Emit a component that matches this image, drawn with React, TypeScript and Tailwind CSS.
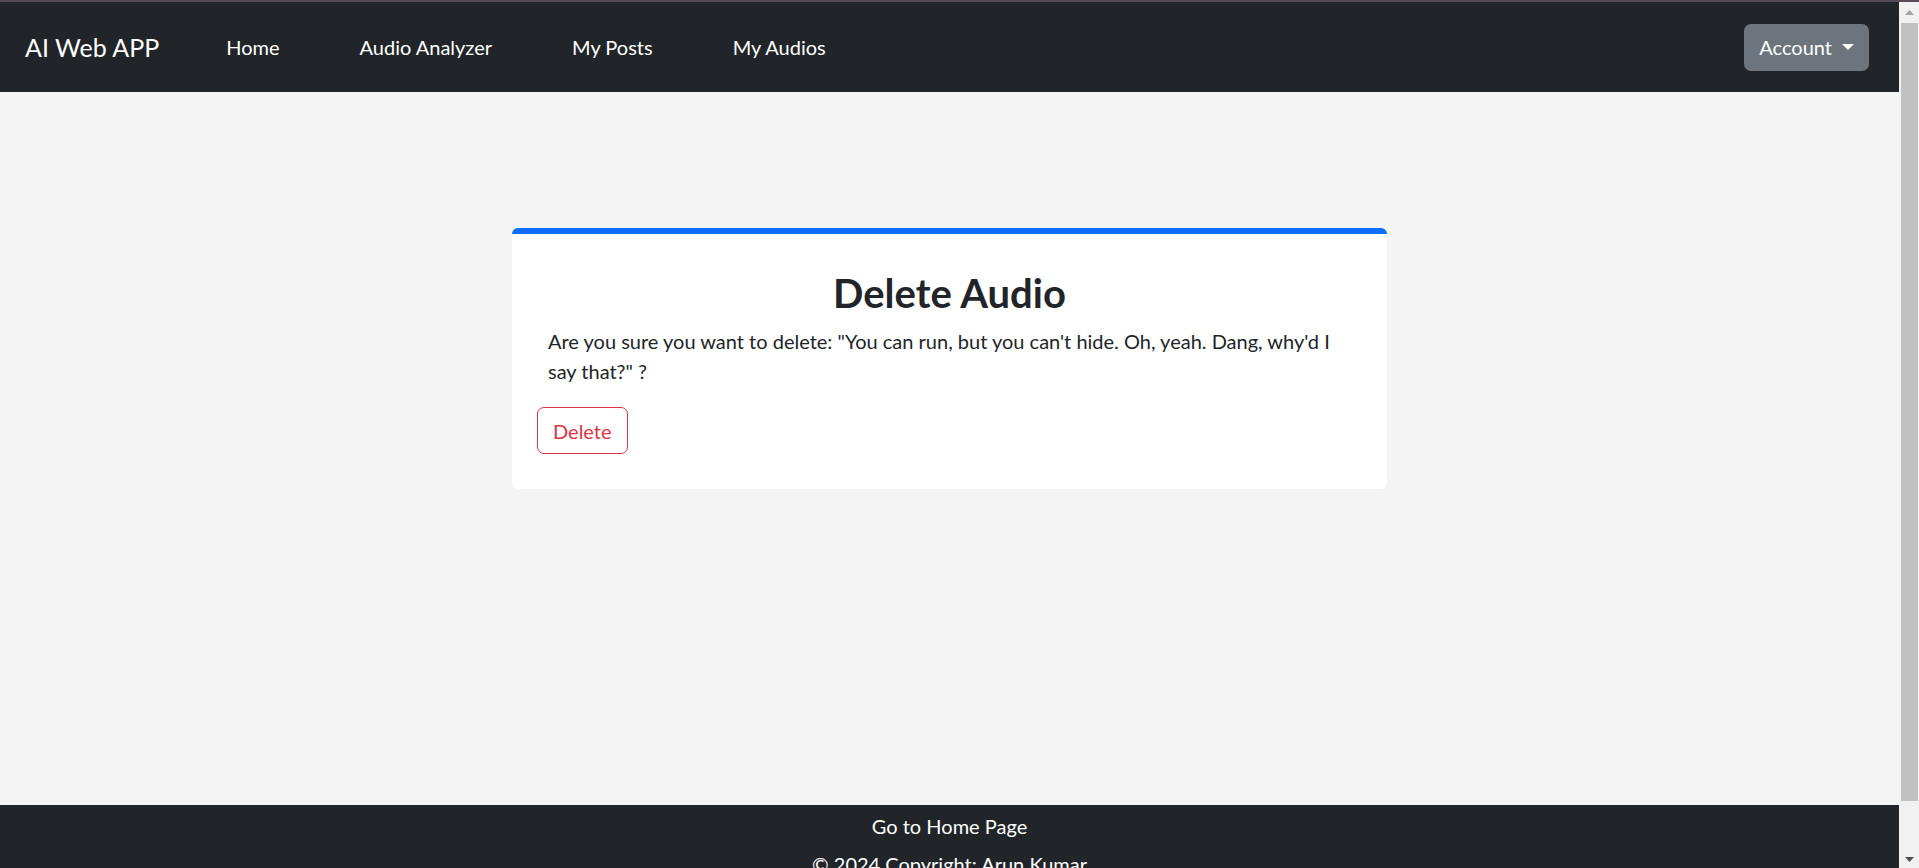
import { useState } from 'react';

const links = ['Home', 'Audio Analyzer', 'My Posts', 'My Audios'];

function Scrollbar() {
  return (
    <div className="w-[20px] shrink-0 bg-[#f1f1f1] flex flex-col">
      <div className="h-[21px] flex items-center justify-center">
        <svg width="9" height="5" viewBox="0 0 9 5"><path d="M4.5 0L9 5H0z" fill="#a3a3a3" /></svg>
      </div>
      <div className="h-[778px] ml-[2px] mr-[1px] bg-[#c1c1c1]" />
      <div className="flex-1 flex items-end justify-center pb-[6px]">
        <svg width="9" height="5" viewBox="0 0 9 5"><path d="M0 0H9L4.5 5z" fill="#505050" /></svg>
      </div>
    </div>
  );
}

export default function App() {
  const [open, setOpen] = useState(false);

  return (
    <div className="h-[868px] flex flex-col overflow-hidden text-[20px] leading-[30px] text-[#212529]" style={{ fontFamily: 'Lato, "Liberation Sans", sans-serif' }}>
      <div className="h-[2px] shrink-0 bg-[#574b57]" />
      <div className="flex-1 min-h-0 flex">
        <div className="flex-1 min-w-0 flex flex-col">
          <nav className="h-[90px] shrink-0 bg-[#212529] flex items-center pl-[25px] pr-[30px]">
            <a href="#" className="text-[25px] leading-[36px] text-white">AI Web APP</a>
            <ul className="flex items-center gap-[80px] ml-[67px]">
              {links.map(l => (
                <li key={l}><a href="#" className="text-white">{l}</a></li>
              ))}
            </ul>
            <div className="ml-auto relative">
              <button onClick={() => setOpen(!open)} className="h-[47px] px-[15px] rounded-[7px] bg-[#6c757d] text-white flex items-center">
                Account
                <span className="ml-[10px] w-0 h-0 border-t-[6px] border-t-white border-x-[6px] border-x-transparent" />
              </button>
            </div>
          </nav>

          <main className="h-[713px] shrink-0 bg-[#f4f4f4] pt-[136px]">
            <div className="w-[875px] mx-auto bg-white rounded-[6px] border-t-[6px] border-[#0d6efd] px-[25px] pt-[35px] pb-[35px]">
              <h2 className="text-center text-[40px] leading-[48px] font-bold mb-[9px]">Delete Audio</h2>
              <p className="px-[11px] mb-[21px]">
                Are you sure you want to delete: "You can run, but you can't hide. Oh, yeah. Dang, why'd I say that?" ?
              </p>
              <button className="h-[47px] px-[15px] border border-[#dc3545] text-[#dc3545] rounded-[7px] hover:bg-[#dc3545] hover:text-white">Delete</button>
            </div>
          </main>

          <footer className="flex-1 min-h-0 bg-[#212529] text-white text-center pt-[6px]">
            <a href="#" className="block">Go to Home Page</a>
            <p className="mt-[8px]">© 2024 Copyright: Arun Kumar</p>
          </footer>
        </div>
        <Scrollbar />
      </div>
    </div>
  );
}
